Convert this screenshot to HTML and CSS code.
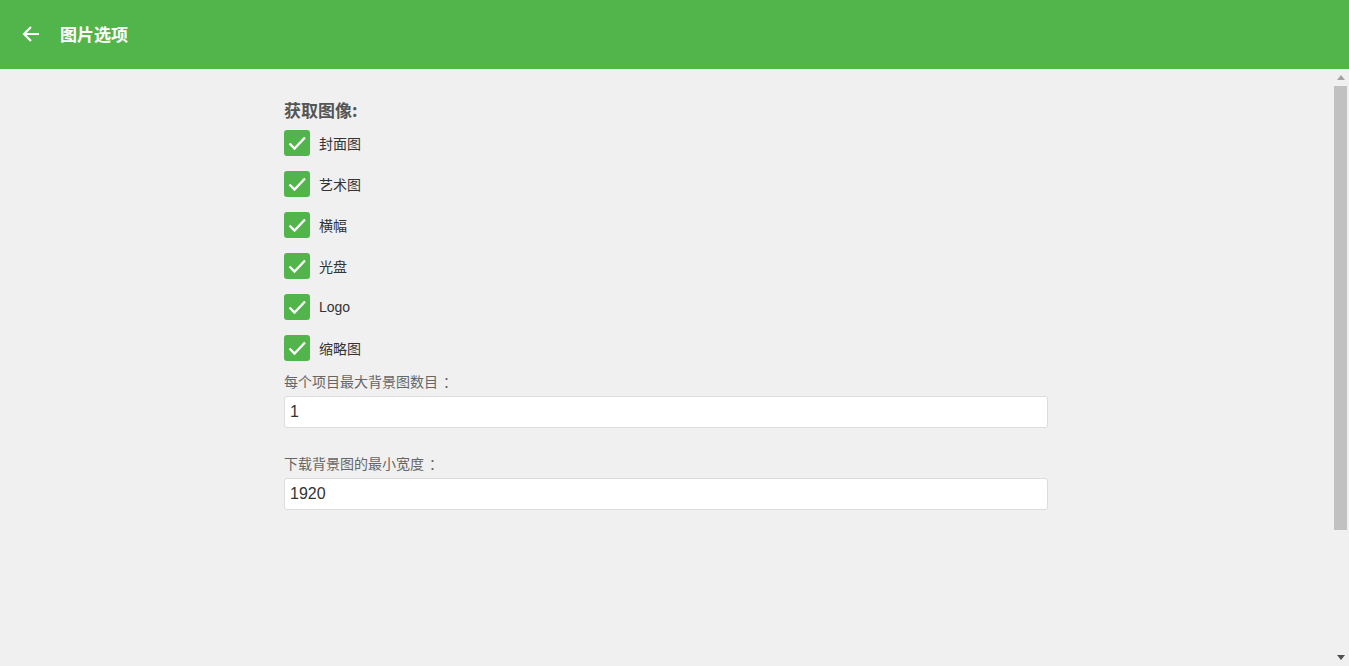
FILE: index.html
```html
<!DOCTYPE html>
<html lang="zh-CN">
<head>
  <meta charset="UTF-8" />
  <meta name="viewport" content="width=device-width, initial-scale=1.0"/>
  <title>图片选项</title>
  <link rel="stylesheet" href="styles.css">
</head>
<body>
  <div class="header">
    <button class="back-btn" aria-label="返回">
      <svg width="18" height="18" viewBox="0 0 18 18"><path d="M17 9H2.5M9 2L2 9l7 7" fill="none" stroke="#fff" stroke-width="2.2"/></svg>
    </button>
    <h1>图片选项</h1>
  </div>
  <div class="main">
    <div class="content">
      <div class="page">
        <h2>获取图像:</h2>
        <div class="checks">
          <label class="check"><span class="box"><svg width="26" height="26" viewBox="0 0 26 26"><path d="M5.5 13.5l5 5L21 7.5" fill="none" stroke="#fff" stroke-width="2.4"/></svg></span>封面图</label>
          <label class="check"><span class="box"><svg width="26" height="26" viewBox="0 0 26 26"><path d="M5.5 13.5l5 5L21 7.5" fill="none" stroke="#fff" stroke-width="2.4"/></svg></span>艺术图</label>
          <label class="check"><span class="box"><svg width="26" height="26" viewBox="0 0 26 26"><path d="M5.5 13.5l5 5L21 7.5" fill="none" stroke="#fff" stroke-width="2.4"/></svg></span>横幅</label>
          <label class="check"><span class="box"><svg width="26" height="26" viewBox="0 0 26 26"><path d="M5.5 13.5l5 5L21 7.5" fill="none" stroke="#fff" stroke-width="2.4"/></svg></span>光盘</label>
          <label class="check"><span class="box"><svg width="26" height="26" viewBox="0 0 26 26"><path d="M5.5 13.5l5 5L21 7.5" fill="none" stroke="#fff" stroke-width="2.4"/></svg></span>Logo</label>
          <label class="check"><span class="box"><svg width="26" height="26" viewBox="0 0 26 26"><path d="M5.5 13.5l5 5L21 7.5" fill="none" stroke="#fff" stroke-width="2.4"/></svg></span>缩略图</label>
        </div>
        <div class="field">
          <label for="max-backdrops">每个项目最大背景图数目<span class="colon">：</span></label>
          <input type="text" id="max-backdrops" value="1">
        </div>
        <div class="field">
          <label for="min-width">下载背景图的最小宽度<span class="colon">：</span></label>
          <input type="text" id="min-width" value="1920">
        </div>
      </div>
    </div>
    <div class="scrollbar">
      <div class="sb-btn"><svg width="8" height="5" viewBox="0 0 8 5"><path d="M0 5L4 0l4 5z" fill="#a3a3a3"/></svg></div>
      <div class="sb-track"><div class="sb-thumb"></div></div>
      <div class="sb-btn"><svg width="8" height="5" viewBox="0 0 8 5"><path d="M0 0h8L4 5z" fill="#505050"/></svg></div>
    </div>
  </div>
</body>
</html>
```

FILE: styles.css
```css
body {
  font-family: "Liberation Sans", Arial, "Noto Sans CJK SC", sans-serif;
  margin: 0;
  background-color: #f0f0f0;
  color: #333;
  height: 100vh;
  display: flex;
  flex-direction: column;
  overflow: hidden;
}

.header {
  height: 69px;
  box-sizing: border-box;
  padding-bottom: 2px;
  flex: none;
  background-color: #52b54b;
  display: flex;
  align-items: center;
  padding-left: 20px;
  gap: 18px;
}

.back-btn {
  border: none;
  background: none;
  padding: 2px;
  display: flex;
  cursor: pointer;
}

h1 {
  margin: 0;
  font-family: "Noto Sans CJK SC", sans-serif;
  font-size: 17px;
  font-weight: 700;
  color: #fff;
  line-height: 20px;
}

.main {
  flex: 1;
  display: flex;
  min-height: 0;
}

.content {
  flex: 1;
  overflow: hidden;
}

.scrollbar {
  width: 17px;
  flex: none;
  display: flex;
  flex-direction: column;
  background-color: #f0f0f0;
}

.sb-btn {
  height: 17px;
  display: flex;
  align-items: center;
  justify-content: center;
}

.sb-track {
  flex: 1;
  padding: 0 2px;
}

.sb-thumb {
  height: 444px;
  background-color: #c1c1c1;
}

.page {
  max-width: 764px;
  margin: 0 auto;
  padding: 30px 0 0;
}

h2 {
  margin: 0 0 9px;
  font-family: "Noto Sans CJK SC", sans-serif;
  font-size: 17px;
  font-weight: 700;
  color: #555;
  line-height: 22px;
}

.checks {
  display: flex;
  flex-direction: column;
  gap: 15px;
}

.check {
  display: flex;
  align-items: center;
  gap: 9px;
  font-size: 14px;
  color: #333;
  height: 26px;
}

.box {
  width: 26px;
  height: 26px;
  border-radius: 3px;
  background-color: #52b54b;
  display: flex;
}

.field {
  display: flex;
  flex-direction: column;
  margin-top: 11px;
}

.field + .field {
  margin-top: 26px;
}

.field label {
  font-family: "Noto Sans CJK SC", sans-serif;
  font-size: 14px;
  color: #666;
  line-height: 18px;
  margin-bottom: 6px;
}

.colon {
  padding-left: 5px;
}

.field input {
  height: 32px;
  box-sizing: border-box;
  border: 1px solid #dcdcdc;
  border-radius: 3px;
  background-color: #fff;
  padding: 0 5px;
  font-family: inherit;
  font-size: 16px;
  color: #333;
}
```
